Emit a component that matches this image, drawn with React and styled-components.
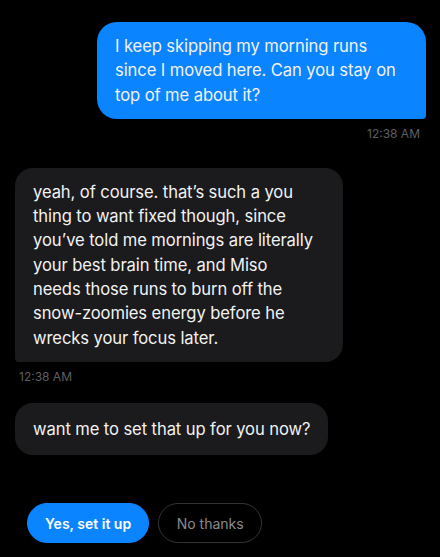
import React from "react";
import styled, { createGlobalStyle } from "styled-components";

const Global = createGlobalStyle`
  html, body { margin: 0; padding: 0; background: #000; }
  body { font-family: Inter, "Noto Sans", sans-serif; -webkit-font-smoothing: antialiased; }
`;

const Screen = styled.div`
  width: 440px;
  height: 557px;
  box-sizing: border-box;
  background: #000;
  padding: 22px 14px 0 15px;
  display: flex;
  flex-direction: column;
  overflow: hidden;
`;

const Group = styled.div`
  display: flex;
  flex-direction: column;
  align-items: ${(p) => (p.$mine ? "flex-end" : "flex-start")};
  margin-bottom: ${(p) => p.$gap || 0}px;
`;

const Bubble = styled.div`
  box-sizing: border-box;
  width: ${(p) => (p.$w ? `${p.$w}px` : "fit-content")};
  padding: ${(p) => p.$pv || 12}px ${(p) => p.$pr || 18}px ${(p) => p.$pv || 12}px 18px;
  font-size: 16.6px;
  line-height: 24.3px;
  letter-spacing: -0.1px;
  color: #f2f2f2;
  background: ${(p) => (p.$mine ? "#0a84ff" : "#1b1b1d")};
  border-radius: ${(p) => (p.$mine ? "20px 20px 4px 20px" : p.$tail ? "18px 18px 18px 4px" : "18px")};
`;

const Time = styled.div`
  font-size: 12px;
  color: #5f5f63;
  margin-top: 8px;
  padding: 0 ${(p) => (p.$mine ? "6px" : "0")} 0 ${(p) => (p.$mine ? "0" : "4px")};
  line-height: 14px;
`;

const Actions = styled.div`
  display: flex;
  gap: 9px;
  padding-left: 12px;
  margin-top: -2px;
`;

const Chip = styled.button`
  box-sizing: border-box;
  height: 40px;
  padding: 0 ${(p) => (p.$primary ? "17px" : "17.5px")};
  border-radius: 20px;
  font-family: Inter, "Noto Sans", sans-serif;
  font-size: 14px;
  font-weight: ${(p) => (p.$primary ? 600 : 400)};
  color: ${(p) => (p.$primary ? "#fff" : "#8a8a8e")};
  background: ${(p) => (p.$primary ? "#0a84ff" : "transparent")};
  border: 1px solid ${(p) => (p.$primary ? "#0a84ff" : "#333336")};
  cursor: pointer;
`;

export default function App() {
  return (
    <>
      <Global />
      <Screen>
        <Group $mine $gap={27}>
          <Bubble $mine $w={329}>
            I keep skipping my morning runs since I moved here. Can you stay on top of me about it?
          </Bubble>
          <Time $mine>12:38 AM</Time>
        </Group>
        <Group $gap={19}>
          <Bubble $tail $w={328} $pv={12} $pr={24}>
            yeah, of course. that’s such a you thing to want fixed though, since you’ve told me mornings are literally your best brain time, and Miso
            <br />
            needs those runs to burn off the
            <br />
            snow-zoomies energy before he wrecks your focus later.
          </Bubble>
          <Time>12:38 AM</Time>
        </Group>
        <Group $gap={50}>
          <Bubble $pv={14}>want me to set that up for you now?</Bubble>
        </Group>
        <Actions>
          <Chip $primary>Yes, set it up</Chip>
          <Chip>No thanks</Chip>
        </Actions>
      </Screen>
    </>
  );
}
